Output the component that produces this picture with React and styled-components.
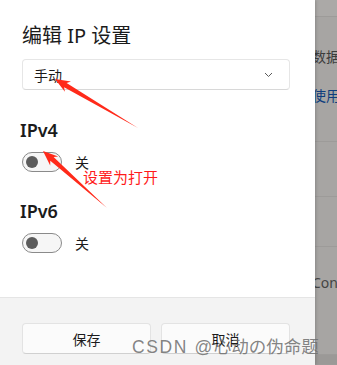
import React from "react"
import styled, { createGlobalStyle } from "styled-components"

const GlobalStyle = createGlobalStyle`
  html, body {
    margin: 0;
    padding: 0;
    width: 337px;
    height: 365px;
    overflow: hidden;
    background: #a6a4a2;
  }
`

const Page = styled.div`
  position: relative;
  display: flex;
  width: 337px;
  height: 365px;
  font-family: "Noto Sans", "Noto Sans CJK SC", sans-serif;
  color: #1b1b1b;
`

const Dialog = styled.div`
  position: relative;
  z-index: 1;
  flex: 0 0 315px;
  width: 315px;
  display: flex;
  flex-direction: column;
  background: #fff;
  box-shadow: 1px 0 3px rgba(0, 0, 0, 0.18);
`

const Body = styled.div`
  flex: 1;
  padding: 22px 25px 0 22px;
`

const Title = styled.h2`
  margin: 0;
  font-size: 20px;
  line-height: 28px;
  font-weight: 400;
`

const Select = styled.div`
  margin-top: 9px;
  height: 31px;
  box-sizing: border-box;
  display: flex;
  align-items: center;
  justify-content: space-between;
  padding: 0 16px 0 11px;
  border: 1px solid #e6e6e6;
  border-bottom-color: #d8d8d8;
  border-radius: 4px;
  font-size: 14px;
`

const SectionTitle = styled.div`
  margin-top: ${props => props.top}px;
  margin-left: -2px;
  font-size: 18px;
  line-height: 24px;
  font-weight: 600;
`

const ToggleRow = styled.div`
  display: flex;
  align-items: center;
  gap: 13px;
  margin-top: 10px;
  font-size: 14px;
`

const Switch = styled.div`
  width: 40px;
  height: 20px;
  box-sizing: border-box;
  display: flex;
  align-items: center;
  padding-left: 3px;
  border: 1px solid #8a8a8a;
  border-radius: 10px;
  background: #f6f6f6;
`

const Knob = styled.span`
  width: 12px;
  height: 12px;
  border-radius: 50%;
  background: #5c5c5c;
`

const Footer = styled.div`
  height: 68px;
  box-sizing: border-box;
  display: grid;
  grid-template-columns: 1fr 1fr;
  gap: 10px;
  align-content: start;
  padding: 25px 25px 0 22px;
  border-top: 1px solid #e5e5e5;
  background: #f3f3f3;
`

const Button = styled.div`
  height: 31px;
  box-sizing: border-box;
  display: flex;
  align-items: center;
  justify-content: center;
  border: 1px solid #e3e3e3;
  border-bottom-color: #d0d0d0;
  border-radius: 4px;
  background: #fbfbfb;
  font-size: 14px;
`

const Side = styled.div`
  flex: 1;
  min-width: 0;
  display: flex;
  flex-direction: column;
  background: #a7a5a3;
`

const SideBlock = styled.div`
  height: ${props => props.h}px;
  box-sizing: border-box;
  border-bottom: 1px solid #9d9b99;
  background: ${props => props.bg || "transparent"};
  padding-top: ${props => props.pad || 0}px;
`

const SideText = styled.div`
  margin-left: -3px;
  white-space: nowrap;
  font-size: 14px;
  line-height: 18px;
  color: ${props => props.color};
  margin-bottom: ${props => props.gap || 0}px;
`

const Annotation = styled.svg`
  position: absolute;
  left: 0;
  top: 0;
  z-index: 2;
  pointer-events: none;
`

const Note = styled.div`
  position: absolute;
  z-index: 2;
  left: 83px;
  top: 167px;
  font-size: 15px;
  line-height: 20px;
  color: #ff1a1a;
`

const Watermark = styled.div`
  position: absolute;
  z-index: 3;
  left: 132px;
  top: 335px;
  font-size: 17.5px;
  line-height: 22px;
  color: rgba(110, 110, 110, 0.85);
  white-space: nowrap;
  span {
    font-family: "Liberation Sans", sans-serif;
    letter-spacing: 1.6px;
  }
`

const arrowPoints = (tip, tail) => {
  const dx = tail[0] - tip[0]
  const dy = tail[1] - tip[1]
  const len = Math.hypot(dx, dy)
  const u = [dx / len, dy / len]
  const n = [-u[1], u[0]]
  const at = (d, w) => [tip[0] + u[0] * d + n[0] * w, tip[1] + u[1] * d + n[1] * w]
  const pts = [tip, at(15, 6), at(12, 2.5), tail, at(12, -2.5), at(15, -6)]
  return pts.map(p => p.map(v => v.toFixed(1)).join(",")).join(" ")
}

const Chevron = () => (
  <svg width="9" height="6" viewBox="0 0 9 6">
    <path d="M1 1 L4.5 4.5 L8 1" fill="none" stroke="#5a5a5a" strokeWidth="1" />
  </svg>
)

const Toggle = ({ label }) => (
  <ToggleRow>
    <Switch>
      <Knob />
    </Switch>
    {label}
  </ToggleRow>
)

export default function App() {
  return (
    <>
      <GlobalStyle />
      <Page>
        <Dialog>
          <Body>
            <Title>编辑 IP 设置</Title>
            <Select>
              手动
              <Chevron />
            </Select>
            <SectionTitle top={28}>IPv4</SectionTitle>
            <Toggle label="关" />
            <SectionTitle top={27}>IPv6</SectionTitle>
            <Toggle label="关" />
          </Body>
          <Footer>
            <Button>保存</Button>
            <Button>取消</Button>
          </Footer>
        </Dialog>
        <Side>
          <SideBlock h={17} bg="#aba9a7" />
          <SideBlock h={125} pad={31}>
            <SideText color="#3c3c3c" gap={21}>数据</SideText>
            <SideText color="#0e3d7e">使用</SideText>
          </SideBlock>
          <SideBlock h={55} />
          <SideBlock h={50} />
          <SideBlock h={108} pad={27}>
            <SideText color="#444">Conf</SideText>
          </SideBlock>
          <SideBlock h={10} bg="#9b9997" />
        </Side>
        <Annotation width="337" height="365">
          <polygon points={arrowPoints([55, 79], [138, 128])} fill="#ff2a1a" />
          <polygon points={arrowPoints([43, 151], [107, 208])} fill="#ff2a1a" />
        </Annotation>
        <Note>设置为打开</Note>
        <Watermark>
          <span>CSDN @</span>心动の伪命题
        </Watermark>
      </Page>
    </>
  )
}
